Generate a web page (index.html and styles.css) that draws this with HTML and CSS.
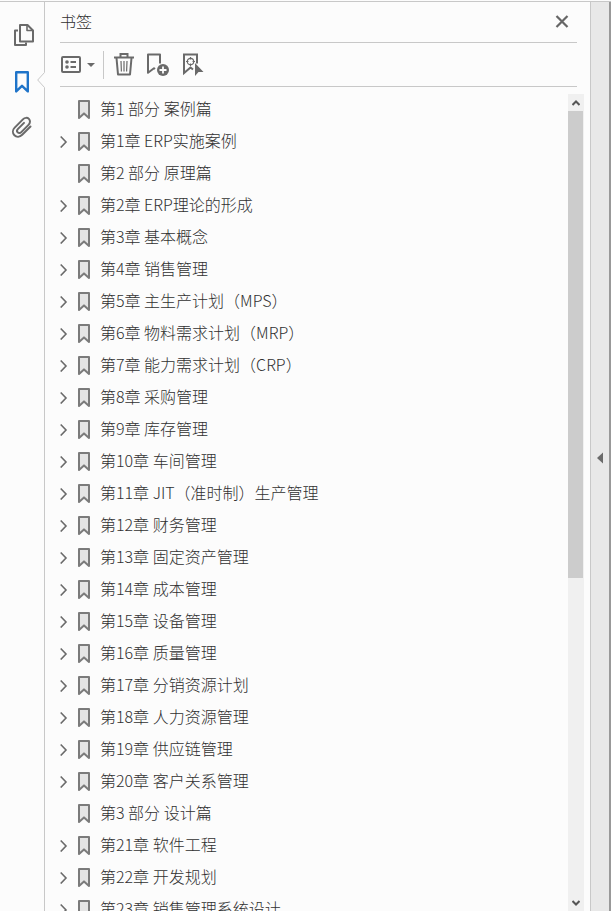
FILE: index.html
```html
<!DOCTYPE html>
<html lang="zh-CN">
<head>
    <meta charset="UTF-8">
    <meta name="viewport" content="width=device-width, initial-scale=1.0">
    <title>书签</title>
    <link rel="stylesheet" href="styles.css">
</head>
<body>

<!-- Shared icons -->
<svg class="symbols" aria-hidden="true">
    <symbol id="mark" viewBox="0 0 14 22">
        <path d="M2 3h10v17l-5-4.600-5 4.600z" fill="#e4e4e4" stroke="#7b7b7b" stroke-width="2" stroke-linejoin="round"/>
    </symbol>
    <symbol id="arrow" viewBox="0 0 8 14">
        <path d="M.7 2.500L6 8 .7 13.500" fill="none" stroke="#6a6a6a" stroke-width="1.600"/>
    </symbol>
</svg>

<div class="window">
    <nav class="rail">
        <button class="rail-button" aria-label="页面缩略图">
            <svg width="22" height="24" viewBox="0 0 22 24" fill="none" stroke="#6a6a6a" stroke-width="2" stroke-linejoin="round">
                <path d="M6 7.500H3V22h11v-2.500"/>
                <path d="M8 2h7.500L21 7.500V18.500H8z"/>
                <path d="M15 2v5.500h6" stroke-width="1.600"/>
            </svg>
        </button>
        <button class="rail-button active" aria-label="书签">
            <svg width="18" height="26" viewBox="0 0 18 26" fill="none" stroke="#1f74c9" stroke-width="2.400" stroke-linejoin="round">
                <path d="M2.200 4.200h11.600v19.200L8 17.800l-5.800 5.600z"/>
            </svg>
            <svg class="notch" width="8" height="16" viewBox="0 0 8 16">
                <path d="M8 0L.7 8 8 16z" fill="#fcfcfc"/>
                <path d="M7.500 .5L.7 8l6.800 7.500" fill="none" stroke="#c8c8c8"/>
            </svg>
        </button>
        <button class="rail-button" aria-label="附件">
            <svg width="24" height="22" viewBox="0 0 24 22" fill="none" stroke="#6a6a6a" stroke-width="2" stroke-linecap="round">
                <path d="M19.500 10.500l-8.300 8.300c-2.400 2.400-5.800 2.400-7.800.4s-2-5.300.3-7.600l8.200-8.200c1.900-1.900 4.500-2 6-.5s1.500 4.100-.4 6l-7.200 7.200c-1.200 1.200-2.700 1.200-3.600.3s-.8-2.400.3-3.500l6-6"/>
            </svg>
        </button>
    </nav>

    <main class="panel">
        <header class="panel-header">
            <h1>书签</h1>
            <button class="close" aria-label="关闭">
                <svg width="14" height="14" viewBox="0 0 14 14"><path d="M1.500 1l11 11M12.500 1L1.500 12" stroke="#666" stroke-width="2.200"/></svg>
            </button>
        </header>

        <div class="toolbar">
            <button class="options" aria-label="选项">
                <svg width="20" height="18" viewBox="0 0 20 18">
                    <rect x="1" y="1" width="18" height="15" rx="1" fill="none" stroke="#6a6a6a" stroke-width="2"/>
                    <circle cx="6" cy="6" r="1.800" fill="#6a6a6a"/>
                    <circle cx="6" cy="11" r="1.800" fill="#6a6a6a"/>
                    <path d="M9.500 6H15M9.500 11H15" stroke="#6a6a6a" stroke-width="2"/>
                </svg>
                <svg width="8" height="4" viewBox="0 0 8 4"><path d="M0 0h8L4 4z" fill="#6a6a6a"/></svg>
            </button>
            <span class="divider"></span>
            <button class="delete" aria-label="删除">
                <svg width="20" height="24" viewBox="0 0 20 24" fill="none" stroke="#6a6a6a">
                    <path d="M0 4.500h20" stroke-width="2"/>
                    <path d="M6.500 4V1h7v3" stroke-width="2"/>
                    <path d="M2.500 5l1.500 16.500h12L17.500 5" stroke-width="2" stroke-linejoin="round"/>
                    <path d="M7 8l.4 10.500M10 8v10.500M13 8l-.4 10.500" stroke-width="1.200"/>
                </svg>
            </button>
            <button class="add" aria-label="新建书签">
                <svg width="24" height="24" viewBox="0 0 24 24">
                    <path d="M9 16l-1-.8-6 4.600V1.500h12v9" fill="none" stroke="#6a6a6a" stroke-width="2" stroke-linejoin="round"/>
                    <circle cx="17" cy="17" r="6" fill="#6a6a6a"/>
                    <path d="M13.500 17h7M17 13.500v7" stroke="#fcfcfc" stroke-width="1.800"/>
                </svg>
            </button>
            <button class="locate" aria-label="查找当前书签">
                <svg width="22" height="24" viewBox="0 0 22 24">
                    <path d="M11 16.500l-2.500-2L2 20V1.500h13v9" fill="none" stroke="#6a6a6a" stroke-width="2"/>
                    <circle cx="8.500" cy="8.500" r="3.200" fill="none" stroke="#6a6a6a" stroke-width="1.200"/>
                    <path d="M8.500 4v2.500M8.500 10.500V13M4 8.500h2.500M10.500 8.500H13" stroke="#6a6a6a" stroke-width="1.200"/>
                    <path d="M13 10v13l3.500-4H21.500z" fill="#6a6a6a"/>
                </svg>
            </button>
        </div>

        <div class="content">
            <ul class="bookmarks">
                <li><svg class="mark"><use href="#mark"/></svg><a href="#">第1 部分 案例篇</a></li>
                <li><button class="expand" aria-label="展开"><svg><use href="#arrow"/></svg></button><svg class="mark"><use href="#mark"/></svg><a href="#">第1章 ERP实施案例</a></li>
                <li><svg class="mark"><use href="#mark"/></svg><a href="#">第2 部分 原理篇</a></li>
                <li><button class="expand" aria-label="展开"><svg><use href="#arrow"/></svg></button><svg class="mark"><use href="#mark"/></svg><a href="#">第2章 ERP理论的形成</a></li>
                <li><button class="expand" aria-label="展开"><svg><use href="#arrow"/></svg></button><svg class="mark"><use href="#mark"/></svg><a href="#">第3章 基本概念</a></li>
                <li><button class="expand" aria-label="展开"><svg><use href="#arrow"/></svg></button><svg class="mark"><use href="#mark"/></svg><a href="#">第4章 销售管理</a></li>
                <li><button class="expand" aria-label="展开"><svg><use href="#arrow"/></svg></button><svg class="mark"><use href="#mark"/></svg><a href="#">第5章 主生产计划（MPS）</a></li>
                <li><button class="expand" aria-label="展开"><svg><use href="#arrow"/></svg></button><svg class="mark"><use href="#mark"/></svg><a href="#">第6章 物料需求计划（MRP）</a></li>
                <li><button class="expand" aria-label="展开"><svg><use href="#arrow"/></svg></button><svg class="mark"><use href="#mark"/></svg><a href="#">第7章 能力需求计划（CRP）</a></li>
                <li><button class="expand" aria-label="展开"><svg><use href="#arrow"/></svg></button><svg class="mark"><use href="#mark"/></svg><a href="#">第8章 采购管理</a></li>
                <li><button class="expand" aria-label="展开"><svg><use href="#arrow"/></svg></button><svg class="mark"><use href="#mark"/></svg><a href="#">第9章 库存管理</a></li>
                <li><button class="expand" aria-label="展开"><svg><use href="#arrow"/></svg></button><svg class="mark"><use href="#mark"/></svg><a href="#">第10章 车间管理</a></li>
                <li><button class="expand" aria-label="展开"><svg><use href="#arrow"/></svg></button><svg class="mark"><use href="#mark"/></svg><a href="#">第11章 JIT（准时制）生产管理</a></li>
                <li><button class="expand" aria-label="展开"><svg><use href="#arrow"/></svg></button><svg class="mark"><use href="#mark"/></svg><a href="#">第12章 财务管理</a></li>
                <li><button class="expand" aria-label="展开"><svg><use href="#arrow"/></svg></button><svg class="mark"><use href="#mark"/></svg><a href="#">第13章 固定资产管理</a></li>
                <li><button class="expand" aria-label="展开"><svg><use href="#arrow"/></svg></button><svg class="mark"><use href="#mark"/></svg><a href="#">第14章 成本管理</a></li>
                <li><button class="expand" aria-label="展开"><svg><use href="#arrow"/></svg></button><svg class="mark"><use href="#mark"/></svg><a href="#">第15章 设备管理</a></li>
                <li><button class="expand" aria-label="展开"><svg><use href="#arrow"/></svg></button><svg class="mark"><use href="#mark"/></svg><a href="#">第16章 质量管理</a></li>
                <li><button class="expand" aria-label="展开"><svg><use href="#arrow"/></svg></button><svg class="mark"><use href="#mark"/></svg><a href="#">第17章 分销资源计划</a></li>
                <li><button class="expand" aria-label="展开"><svg><use href="#arrow"/></svg></button><svg class="mark"><use href="#mark"/></svg><a href="#">第18章 人力资源管理</a></li>
                <li><button class="expand" aria-label="展开"><svg><use href="#arrow"/></svg></button><svg class="mark"><use href="#mark"/></svg><a href="#">第19章 供应链管理</a></li>
                <li><button class="expand" aria-label="展开"><svg><use href="#arrow"/></svg></button><svg class="mark"><use href="#mark"/></svg><a href="#">第20章 客户关系管理</a></li>
                <li><svg class="mark"><use href="#mark"/></svg><a href="#">第3 部分 设计篇</a></li>
                <li><button class="expand" aria-label="展开"><svg><use href="#arrow"/></svg></button><svg class="mark"><use href="#mark"/></svg><a href="#">第21章 软件工程</a></li>
                <li><button class="expand" aria-label="展开"><svg><use href="#arrow"/></svg></button><svg class="mark"><use href="#mark"/></svg><a href="#">第22章 开发规划</a></li>
                <li><button class="expand" aria-label="展开"><svg><use href="#arrow"/></svg></button><svg class="mark"><use href="#mark"/></svg><a href="#">第23章 销售管理系统设计</a></li>
            </ul>

            <div class="scrollbar">
                <button class="scroll-button" aria-label="向上滚动">
                    <svg width="8" height="6" viewBox="0 0 8 6"><path d="M.5 5L4 1.500 7.500 5" fill="none" stroke="#555" stroke-width="2"/></svg>
                </button>
                <div class="track"><div class="thumb"></div></div>
                <button class="scroll-button" aria-label="向下滚动">
                    <svg width="8" height="6" viewBox="0 0 8 6"><path d="M.5 1L4 4.500 7.500 1" fill="none" stroke="#555" stroke-width="2"/></svg>
                </button>
            </div>
        </div>
    </main>

    <button class="collapse" aria-label="折叠面板">
        <svg width="6" height="12" viewBox="0 0 6 12"><path d="M6 .5v11L0 6z" fill="#6a6a6a"/></svg>
    </button>
</div>

</body>
</html>
```

FILE: styles.css
```css
* {
    box-sizing: border-box;
}
body {
    margin: 0;
    padding-top: 1px;
    height: 100vh;
    overflow: hidden;
    background: #fcfcfc;
    color: #303030;
    font-family: "Noto Sans CJK SC", sans-serif;
    font-size: 16px;
    font-weight: 300;
}
button {
    display: flex;
    align-items: center;
    justify-content: center;
    margin: 0;
    padding: 0;
    border: none;
    background: none;
    cursor: pointer;
}
svg {
    display: block;
    flex-shrink: 0;
}
.symbols {
    position: absolute;
    width: 0;
    height: 0;
}
.window {
    display: flex;
    height: 100%;
    border-top: 1px solid #c8c8c8;
}

/* Left icon rail */
.rail {
    display: flex;
    flex-direction: column;
    width: 45px;
    padding-top: 10px;
    border-right: 1px solid #c8c8c8;
}
.rail-button {
    position: relative;
    height: 46px;
    width: 45px;
}
.notch {
    position: absolute;
    right: 0;
    top: 14px;
}

/* Bookmark panel */
.panel {
    display: flex;
    flex: 1;
    flex-direction: column;
    min-width: 0;
    padding-left: 15px;
}
.panel-header {
    display: flex;
    align-items: center;
    justify-content: space-between;
    height: 41px;
    margin-right: 13px;
    padding-right: 8px;
    border-bottom: 1px solid #c8c8c8;
}
.panel-header h1 {
    margin: 0;
    padding-bottom: 2px;
    font-size: 16px;
    font-weight: 300;
    line-height: 24px;
}
.toolbar {
    display: flex;
    align-items: center;
    height: 44px;
    margin-right: 13px;
    border-bottom: 1px solid #c8c8c8;
}
.options {
    gap: 6px;
    padding-left: 1px;
}
.divider {
    width: 1px;
    height: 28px;
    margin: 0 10px 0 8px;
    background: #c8c8c8;
}
.add,
.locate {
    margin-left: 12px;
}
.content {
    display: flex;
    flex: 1;
    min-height: 0;
    padding: 6px 6px 0 0;
}
.bookmarks {
    flex: 1;
    margin: 0;
    padding: 0;
    overflow: hidden;
    list-style: none;
}
.bookmarks li {
    display: grid;
    grid-template-columns: 17px 14px 1fr;
    align-items: center;
    height: 32px;
}
.bookmarks a {
    grid-column: 3;
    padding: 0 0 2px 9px;
    color: inherit;
    line-height: 30px;
    text-decoration: none;
    white-space: nowrap;
}
.expand {
    justify-content: flex-start;
    height: 32px;
}
.expand svg {
    width: 8px;
    height: 14px;
}
.mark {
    grid-column: 2;
    width: 14px;
    height: 22px;
}

/* Scrollbar */
.scrollbar {
    display: flex;
    flex-direction: column;
    width: 16px;
    margin-top: 1px;
    background: #f0f0f0;
}
.scroll-button {
    height: 17px;
}
.track {
    flex: 1;
}
.thumb {
    width: 15px;
    height: 59.6%;
    background: #cccccc;
}

/* Strip that folds the panel away */
.collapse {
    width: 21px;
    padding-top: 2px;
    border-left: 1px solid #c8c8c8;
    border-right: 2px solid #999999;
    background: #e8e8e8;
}
```
